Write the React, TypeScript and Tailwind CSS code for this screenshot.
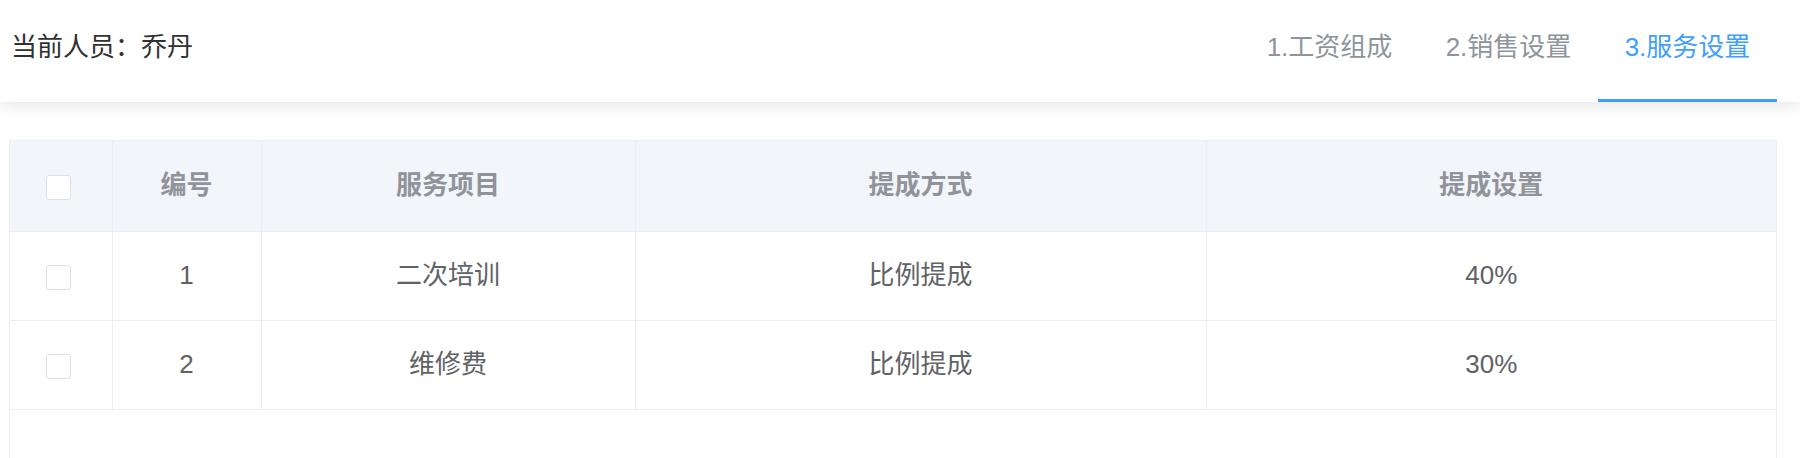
import React, { useState } from 'react';

type Row = { id: number; name: string; mode: string; rate: string };

const rows: Row[] = [
  { id: 1, name: '二次培训', mode: '比例提成', rate: '40%' },
  { id: 2, name: '维修费', mode: '比例提成', rate: '30%' },
];

const tabs = ['1.工资组成', '2.销售设置', '3.服务设置'];

function Checkbox() {
  return <span className="inline-block w-[25px] h-[25px] rounded-[3px] border border-[#dcdfe6] bg-white align-middle" />;
}

export default function App() {
  const [active, setActive] = useState(2);

  return (
    <div className="h-[458px] overflow-hidden bg-white text-[26px] font-['Liberation_Sans','Noto_Sans_CJK_SC',sans-serif]">
      {/* top bar with person name + step tabs */}
      <div className="relative z-10 flex h-[102px] items-center justify-between bg-white pl-[11px] pr-[23px] shadow-[0_5px_14px_rgba(0,0,0,0.09)]">
        <div className="-mt-[8px] text-[#303133]">当前人员：乔丹</div>
        <div className="flex h-full">
          {tabs.map((t, i) => (
            <button
              key={`tab_${i}`}
              onClick={() => setActive(i)}
              className={
                i === active
                  ? 'flex h-full w-[179px] items-center justify-center border-b-[3px] border-[#409eff] pt-[3px] pb-[8px] text-[#409eff]'
                  : 'flex h-full w-[179px] items-center justify-center border-b-[3px] border-transparent pt-[3px] pb-[8px] text-[#8d949c]'
              }
            >
              {t}
            </button>
          ))}
        </div>
      </div>

      <div className="pl-[9px] pr-[23px] pt-[38px]">
        <div className="h-[400px] border border-[#ebeef5]">
          <table className="w-full table-fixed border-collapse text-center">
            <colgroup>
              <col className="w-[102px]" />
              <col className="w-[149px]" />
              <col className="w-[374px]" />
              <col className="w-[571px]" />
              <col />
            </colgroup>
            <thead>
              <tr className="h-[90px] bg-[#f2f5fa] text-[#909399]">
                <th className="border-r border-b border-[#ebeef5] pr-[4px] font-semibold">
                  <Checkbox />
                </th>
                <th className="border-r border-b border-[#ebeef5] font-semibold">编号</th>
                <th className="border-r border-b border-[#ebeef5] font-semibold">服务项目</th>
                <th className="border-r border-b border-[#ebeef5] font-semibold">提成方式</th>
                <th className="border-b border-[#ebeef5] font-semibold">提成设置</th>
              </tr>
            </thead>
            <tbody className="text-[#606266]">
              {rows.map((r) => (
                <tr key={`tr_${r.id}`} className="h-[89px]">
                  <td className="border-r border-b border-[#ebeef5] pr-[4px]">
                    <Checkbox />
                  </td>
                  <td className="border-r border-b border-[#ebeef5]">{r.id}</td>
                  <td className="border-r border-b border-[#ebeef5]">{r.name}</td>
                  <td className="border-r border-b border-[#ebeef5]">{r.mode}</td>
                  <td className="border-b border-[#ebeef5]">{r.rate}</td>
                </tr>
              ))}
            </tbody>
          </table>
        </div>
      </div>
    </div>
  );
}
